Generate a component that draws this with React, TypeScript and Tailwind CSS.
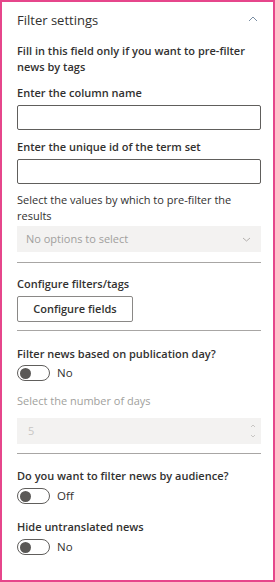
import React from "react";

const Toggle = ({ label }: { label: string }) => (
  <div className="flex items-center gap-[7px] h-[16px]">
    <div className="w-[33px] h-[16px] rounded-full border border-[#605e5c] flex items-center pl-[2px]">
      <div className="w-[11px] h-[11px] rounded-full bg-[#5a5856]" />
    </div>
    <span className="text-[11.5px] text-[#323130] leading-[16px]">{label}</span>
  </div>
);

const Separator = () => <div className="h-px bg-[#a8a6a4]" />;

const Label = ({ children, className = "" }: { children: React.ReactNode; className?: string }) => (
  <div className={`text-[11px] leading-[16px] font-semibold text-[#323130] ${className}`}>{children}</div>
);

export default function App() {
  return (
    <div
      className="w-[275px] h-[582px] border-2 border-[#e6468b] bg-white pl-[15px] pr-[12px] overflow-hidden"
      style={{ fontFamily: '"Open Sans", "Noto Sans", sans-serif' }}
    >
      <div className="flex items-center justify-between mt-[9px] h-[18px]">
        <span className="text-[13px] text-[#323130] leading-[18px]">Filter settings</span>
        <svg width="10" height="6" viewBox="0 0 10 6" className="mr-[3px] mb-[3px]">
          <path d="M1 5 L5 1 L9 5" fill="none" stroke="#7a8ea3" strokeWidth="1" />
        </svg>
      </div>

      <Label className="mt-[14px]">
        Fill in this field only if you want to pre-filter news by tags
      </Label>

      <Label className="mt-[10px]">Enter the column name</Label>
      <div className="mt-[4px] h-[25px] rounded-[2px] border border-[#605e5c]" />

      <Label className="mt-[9px]">Enter the unique id of the term set</Label>
      <div className="mt-[4px] h-[25px] rounded-[2px] border border-[#605e5c]" />

      <div className="mt-[8px] text-[11px] leading-[16px] text-[#323130]">
        Select the values by which to pre-filter the results
      </div>
      <div className="mt-[2px] h-[26px] bg-[#f3f2f1] flex items-center justify-between pl-[9px] pr-[10px]">
        <span className="text-[11px] text-[#a19f9d]">No options to select</span>
        <svg width="9" height="5" viewBox="0 0 9 5">
          <path d="M1 1 L4.5 4 L8 1" fill="none" stroke="#b3b0ad" strokeWidth="1" />
        </svg>
      </div>

      <div className="mt-[10px]">
        <Separator />
      </div>

      <Label className="mt-[13px]">Configure filters/tags</Label>
      <button className="mt-[4px] w-[116px] h-[26px] rounded-[2px] border border-[#8a8886] bg-white text-[11px] font-semibold text-[#323130]">
        Configure fields
      </button>

      <div className="mt-[8px]">
        <Separator />
      </div>

      <Label className="mt-[15px]">Filter news based on publication day?</Label>
      <div className="mt-[3px]">
        <Toggle label="No" />
      </div>

      <div className="mt-[12px] text-[11px] leading-[16px] text-[#a19f9d]">
        Select the number of days
      </div>
      <div className="mt-[9px] h-[26px] bg-[#f3f2f1] flex items-center justify-between pl-[11px] pr-[5px]">
        <span className="text-[11px] text-[#c8c6c4]">5</span>
        <div className="flex flex-col gap-[6px]">
          <svg width="6" height="4" viewBox="0 0 6 4">
            <path d="M1 3 L3 1 L5 3" fill="none" stroke="#c8c6c4" strokeWidth="1" />
          </svg>
          <svg width="6" height="4" viewBox="0 0 6 4">
            <path d="M1 1 L3 3 L5 1" fill="none" stroke="#c8c6c4" strokeWidth="1" />
          </svg>
        </div>
      </div>

      <div className="mt-[9px]">
        <Separator />
      </div>

      <Label className="mt-[14px]">Do you want to filter news by audience?</Label>
      <div className="mt-[4px]">
        <Toggle label="Off" />
      </div>

      <Label className="mt-[15px]">Hide untranslated news</Label>
      <div className="mt-[4px]">
        <Toggle label="No" />
      </div>
    </div>
  );
}
